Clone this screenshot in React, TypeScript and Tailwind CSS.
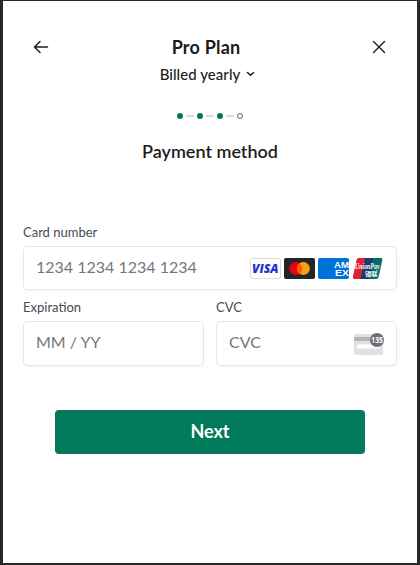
import type { ReactNode } from 'react';

function Visa() {
  return (
    <svg width="31" height="21" viewBox="0 0 31 21">
      <rect x="0.5" y="0.5" width="30" height="20" rx="1.5" fill="#fff" stroke="#dcdce0" />
      <text x="2" y="14.5" textLength="26.5" lengthAdjust="spacingAndGlyphs" fontFamily="Open Sans, sans-serif" fontSize="11.4" fontWeight="800" fontStyle="italic" fill="#1a34d2">VISA</text>
    </svg>
  );
}

function Mastercard() {
  return (
    <svg width="31" height="21" viewBox="0 0 31 21">
      <rect width="31" height="21" rx="2" fill="#252525" />
      <circle cx="11.8" cy="10.5" r="6.5" fill="#eb001b" />
      <circle cx="19.4" cy="10.5" r="6.5" fill="#f79e1b" />
      <path d="M15.6 5.2a6.5 6.5 0 0 1 0 10.6 6.5 6.5 0 0 1 0-10.6z" fill="#ff5f00" />
    </svg>
  );
}

function Amex() {
  return (
    <svg className="overflow-visible" width="31" height="21" viewBox="0 0 31 21">
      <rect width="31" height="21" rx="2" fill="#0071d8" />
      <g fontFamily="Liberation Sans, sans-serif" fontWeight="700" fontSize="9.4" fill="#fff">
        <text x="16" y="10" textLength="15" lengthAdjust="spacingAndGlyphs">AM</text>
        <text x="17" y="18.3" textLength="14" lengthAdjust="spacingAndGlyphs">EX</text>
      </g>
    </svg>
  );
}

function UnionPay() {
  return (
    <svg className="overflow-visible" width="31" height="21" viewBox="0 0 31 21">
      <path d="M6.5 0H14L9.5 21H2.5Q.5 21 .9 19L4.5 2Q5 0 6.5 0z" fill="#dd2230" />
      <path d="M13 0h9l-4.5 21H8.5z" fill="#213a67" />
      <path d="M21.5 0H29q1.7 0 1.3 2L26.6 19q-.4 2-2.4 2H17z" fill="#016f69" />
      <text x="3" y="10.7" textLength="24.5" lengthAdjust="spacingAndGlyphs" fontFamily="Liberation Serif, serif" fontSize="7.8" fontWeight="700" fontStyle="italic" fill="#fff">UnionPay</text>
      <text x="13" y="17.5" textLength="12.5" lengthAdjust="spacingAndGlyphs" fontFamily="Noto Sans CJK SC, sans-serif" fontSize="5.5" fontWeight="700" fill="#fff">银联</text>
    </svg>
  );
}

function CvcCard() {
  return (
    <svg className="overflow-visible" width="29" height="22" viewBox="0 0 29 22">
      <rect x="0" y="1" width="29" height="21" rx="2" fill="#e1e1e4" />
      <rect x="0" y="4" width="29" height="4" fill="#b4b4b9" />
      <rect x="3" y="11.5" width="23" height="4" rx="1" fill="#fff" />
      <circle cx="23" cy="7" r="7" fill="#6d6e78" />
      <text x="17.3" y="9.8" textLength="11.5" lengthAdjust="spacingAndGlyphs" fontFamily="Open Sans, sans-serif" fontSize="8" fontWeight="700" fill="#fff">135</text>
    </svg>
  );
}

function Field({ label, placeholder, height, children }: { label: string; placeholder: string; height: string; children?: ReactNode }) {
  return (
    <label className="flex min-w-0 flex-1 flex-col">
      <span className="mb-[6px] h-[15px] text-[13px] leading-[15px] text-[#484955]">{label}</span>
      <span className={`flex items-center rounded-[5px] border border-[#e6e6e6] pl-3 pr-[13px] shadow-[0_1px_1px_rgba(0,0,0,0.03),0_3px_6px_rgba(0,0,0,0.02)] ${height}`}>
        <span className="flex-1 pb-[3px] text-base leading-5 text-[#757680]">{placeholder}</span>
        {children}
      </span>
    </label>
  );
}

function Steps() {
  return (
    <div className="mt-[29px] flex h-[6px] items-center justify-center gap-[3px]">
      {[0, 1, 2].map((n) => (
        <span key={n} className="flex items-center gap-[3px]">
          <span className="size-[6px] rounded-full bg-[#007a5a]" />
          <span className="h-[2px] w-2 bg-[#dddddd]" />
        </span>
      ))}
      <span className="size-[6px] rounded-full border border-[#616061]" />
    </div>
  );
}

export default function App() {
  return (
    <div className="h-[565px] w-[420px] bg-[#282828] px-[3px] pb-[2px] pt-px font-['Lato',sans-serif] text-[#1d1c1d]">
      <main className="flex h-full flex-col bg-white px-5">
        <header className="mt-[35px] flex h-[22px] shrink-0 items-center justify-between px-[10px]">
          <svg width="16" height="14" viewBox="0 0 16 14" fill="none" stroke="#1d1c1d" strokeWidth="1.5" strokeLinecap="round" strokeLinejoin="round">
            <path d="M7 1.5L1.5 7 7 12.5M2 7h12.5" />
          </svg>
          <h1 className="mr-2 text-lg font-bold leading-[22px] tracking-[0.2px]">Pro Plan</h1>
          <svg width="16" height="14" viewBox="0 0 16 14" fill="none" stroke="#1d1c1d" strokeWidth="1.4" strokeLinecap="round">
            <path d="M2.5 1.5l11 11M13.5 1.5l-11 11" />
          </svg>
        </header>
        <div className="mt-[6px] flex h-5 items-center justify-center gap-[6px] pr-[5px]">
          <span className="text-[15px] font-medium leading-5 tracking-[0.05px]">Billed yearly</span>
          <svg width="9" height="6" viewBox="0 0 9 6" fill="none" stroke="#1d1c1d" strokeWidth="1.5" strokeLinecap="round" strokeLinejoin="round">
            <path d="M1.5 1.500l3 2.8 3-2.8" />
          </svg>
        </div>
        <Steps />
        <h2 className="mt-[21px] text-center text-lg font-semibold leading-[22px]">Payment method</h2>
        <form className="mt-[63px] flex flex-col gap-[10px]">
          <Field label="Card number" placeholder="1234 1234 1234 1234" height="h-[44px]">
            <span className="flex gap-[3px]">
              <Visa />
              <Mastercard />
              <Amex />
              <UnionPay />
            </span>
          </Field>
          <div className="flex gap-3">
            <Field label="Expiration" placeholder="MM / YY" height="h-[45px]" />
            <Field label="CVC" placeholder="CVC" height="h-[45px]">
              <CvcCard />
            </Field>
          </div>
        </form>
        <button type="button" className="mx-8 mt-11 h-11 rounded bg-[#007a5a] pb-[2px] text-lg font-bold text-white">Next</button>
      </main>
    </div>
  );
}
